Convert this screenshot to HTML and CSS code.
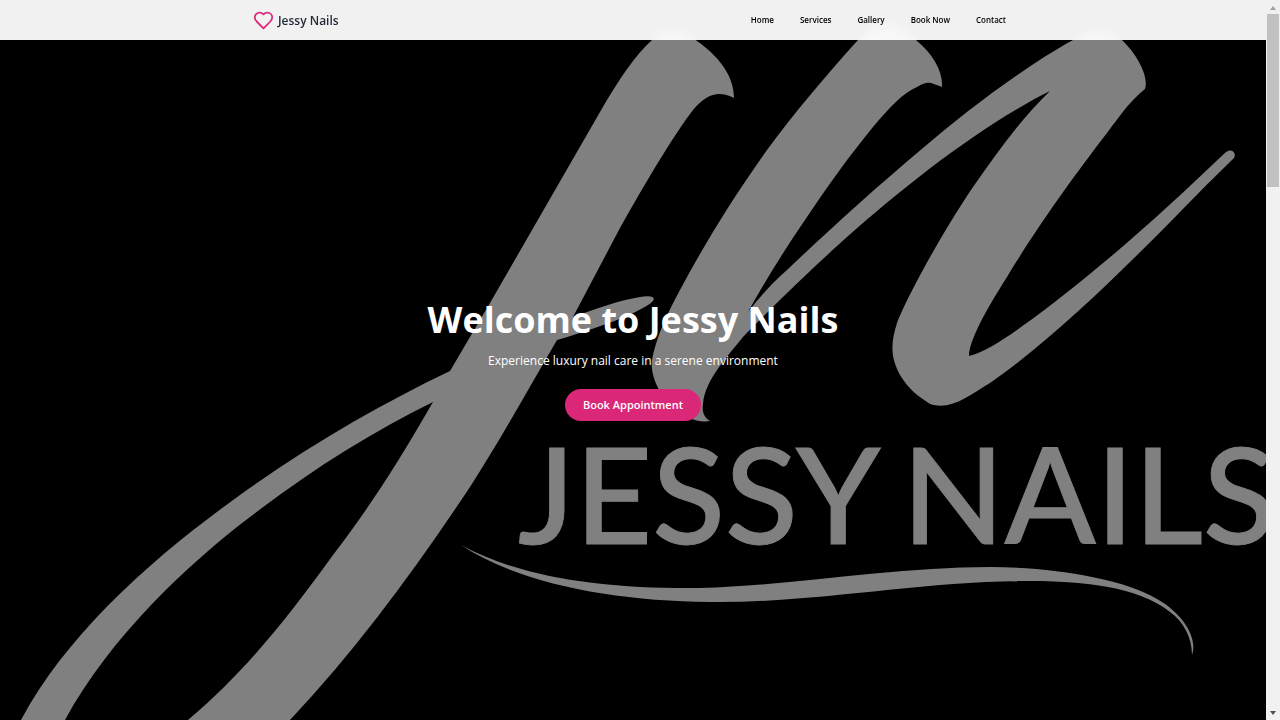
FILE: index.html
```html
<!DOCTYPE html>
<html lang="en">
<head>
<meta charset="utf-8">
<meta name="viewport" content="width=device-width, initial-scale=1">
<title>Jessy Nails</title>
<link rel="stylesheet" href="styles.css">
</head>
<body>
<div class="page">
  <header class="site-header">
    <div class="bar">
      <a class="brand" href="#home">
        <svg class="brand-icon" viewBox="0 0 24 24" aria-hidden="true"><path d="M19 14c1.49-1.46 3-3.21 3-5.5A5.5 5.5 0 0 0 16.5 3c-1.76 0-3 .5-4.5 2-1.5-1.5-2.74-2-4.5-2A5.5 5.5 0 0 0 2 8.500c0 2.300 1.500 4.050 3 5.500l7 7Z"/></svg>
        <span>Jessy Nails</span>
      </a>
      <nav class="links">
        <a href="#home">Home</a>
        <a href="#services">Services</a>
        <a href="#gallery">Gallery</a>
        <a href="#book">Book Now</a>
        <a href="#contact">Contact</a>
      </nav>
    </div>
  </header>
  <main class="hero" id="home">
    <svg class="backdrop" viewBox="0 0 1266 720" preserveAspectRatio="xMidYMid slice" aria-hidden="true">
      <path d="M734 98C734 80 724 60 697 41C680 26 666 27 652 40C635 55 618 81 600 112L490 303L450 371C383 403 311 444 240 495C155 556 68 632 21 720H65C110 637 188 564 250 517C311 470 372 432 433 402C396 466 369 508 333 555C289 616 246 671 188 720H290C357 649 416 568 470 487C502 437 530 386 557 340C585 332 630 317 648 305C660 297 651 295 640 297C620 300 595 309 573 317L620 228C648 178 676 132 693 110C708 92 720 91 734 98Z"/>
      <path d="M942 87C943 71 933 54 916 40C899 22 879 18 858 40C823 79 795 112 767 150C732 199 704 245 680 290C666 316 656 338 652 360C650 376 660 396 672 405C686 418 697 423 710 421C703 417 702 410 703 404C705 380 727 357 743 337C775 304 819 262 847 237C908 183 982 125 1050 91C1021 119 998 151 973 187C940 236 907 297 897 323C890 345 891 358 900 375C910 391 918 396 930 404C951 411 970 395 990 383C1052 340 1120 273 1180 212Q1207 184 1234 158C1237 152 1231 148 1226 152C1164 211 1117 254 1047 308C1020 328 990 351 969 356C969 338 993 299 1007 277C1035 230 1076 173 1107 133C1122 113 1130 101 1145 89C1149 77 1138 56 1123 41C1110 27 1089 30 1073 40C1024 67 965 112 923 148C873 190 827 232 787 270C770 285 760 297 748 312Q774 265 807 217C827 187 850 155 873 127C889 108 904 92 917 87C929 80 930 83 942 87Z"/>
      <text class="wordmark" x="518" y="544">JESSY</text>
      <text class="wordmark" x="902" y="544">NAILS</text>
      <path d="M461 545C525 580 612 589 700 588C790 586 890 567 990 567C1049 567 1123 578 1157 599C1184 614 1198 639 1192 655C1192 638 1184 622 1170 612C1138 586 1080 581 1030 581C920 581 820 603 710 602C614 601 520 584 461 545Z"/>
    </svg>
    <section class="welcome">
      <h1>Welcome to Jessy Nails</h1>
      <p>Experience luxury nail care in a serene environment</p>
      <button type="button">Book Appointment</button>
    </section>
  </main>
</div>
<div class="scroll-track" aria-hidden="true">
  <svg class="arrow" viewBox="0 0 14 14"><path fill="#a0a0a0" d="M4 10L7 6L10 10Z"/></svg>
  <div class="thumb-lane"><div class="thumb"></div></div>
  <svg class="arrow" viewBox="0 0 14 14"><path fill="#505050" d="M4 5H10L7 9Z"/></svg>
</div>
</body>
</html>
```
FILE: styles.css
```css
* { box-sizing: border-box; }

body {
  margin: 0;
  display: flex;
  height: 100vh;
  overflow: hidden;
  background: #000;
  font-family: "Open Sans", "Noto Sans", sans-serif;
}

.page {
  position: relative;
  flex: 1;
  min-width: 0;
}

.site-header {
  position: absolute;
  inset: 0 0 auto 0;
  z-index: 2;
  background: rgba(255, 255, 255, 0.945);
  backdrop-filter: blur(6px);
}

.bar {
  display: flex;
  align-items: center;
  justify-content: space-between;
  max-width: 760px;
  height: 40px;
  margin: 0 auto;
}

.brand {
  display: flex;
  align-items: center;
  gap: 4px;
  color: #1f2937;
  font-size: 12px;
  font-weight: 600;
  text-decoration: none;
}

.brand-icon {
  width: 21px;
  height: 21px;
  fill: none;
  stroke: #db2777;
  stroke-width: 2;
  stroke-linecap: round;
  stroke-linejoin: round;
}

.links {
  display: flex;
  gap: 12px;
}

.links a {
  padding: 4px 7px;
  color: #000;
  font-size: 8px;
  font-weight: 600;
  line-height: 16px;
  text-decoration: none;
}

.hero {
  position: relative;
  display: flex;
  align-items: center;
  justify-content: center;
  height: 100%;
}

.backdrop {
  position: absolute;
  inset: 0;
  width: 100%;
  height: 100%;
  fill: #808080;
}

.wordmark {
  font-family: Lato, sans-serif;
  font-size: 134px;
  font-weight: 500;
  stroke: #808080;
  stroke-width: 1px;
}

.welcome {
  position: relative;
  display: flex;
  flex-direction: column;
  align-items: center;
  color: #fff;
  text-align: center;
}

h1 {
  margin: 0 0 12px;
  font-size: 36px;
  font-weight: 700;
  line-height: 40px;
}

p {
  margin: 0 0 19px;
  font-size: 12px;
  line-height: 18px;
}

button {
  padding: 6px 18px;
  border: 0;
  border-radius: 16px;
  background: #db2777;
  color: #fff;
  font-family: inherit;
  font-size: 11px;
  font-weight: 600;
  line-height: 20px;
}

.scroll-track {
  display: flex;
  flex-direction: column;
  width: 14px;
  background: #f1f1f1;
}

.arrow {
  width: 14px;
  height: 14px;
}

.thumb-lane {
  flex: 1;
  padding: 0 1px;
}

.thumb {
  height: 25%;
  background: #c1c1c1;
}
```
